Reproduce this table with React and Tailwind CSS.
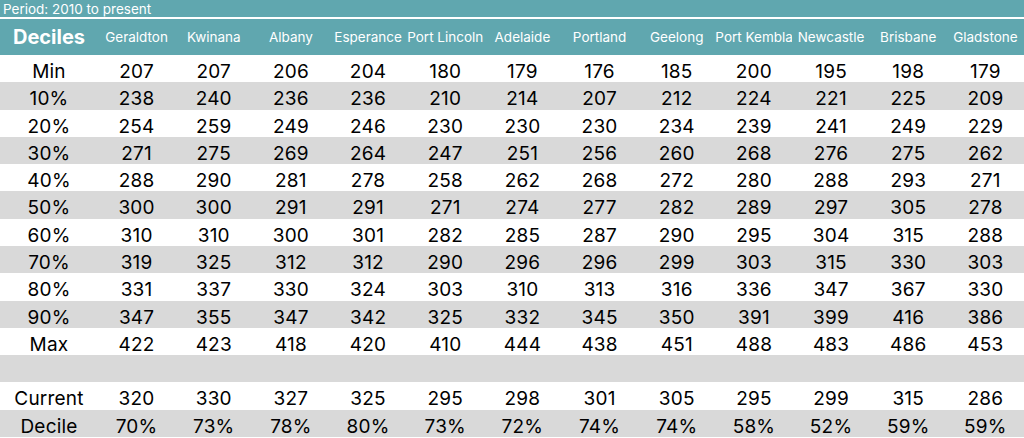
import React from "react";

const cities = ["Geraldton","Kwinana","Albany","Esperance","Port Lincoln","Adelaide","Portland","Geelong","Port Kembla","Newcastle","Brisbane","Gladstone"];

const rows = [
  ["Min", [207,207,206,204,180,179,176,185,200,195,198,179]],
  ["10%", [238,240,236,236,210,214,207,212,224,221,225,209]],
  ["20%", [254,259,249,246,230,230,230,234,239,241,249,229]],
  ["30%", [271,275,269,264,247,251,256,260,268,276,275,262]],
  ["40%", [288,290,281,278,258,262,268,272,280,288,293,271]],
  ["50%", [300,300,291,291,271,274,277,282,289,297,305,278]],
  ["60%", [310,310,300,301,282,285,287,290,295,304,315,288]],
  ["70%", [319,325,312,312,290,296,296,299,303,315,330,303]],
  ["80%", [331,337,330,324,303,310,313,316,336,347,367,330]],
  ["90%", [347,355,347,342,325,332,345,350,391,399,416,386]],
  ["Max", [422,423,418,420,410,444,438,451,488,483,486,453]],
  ["", null],
  ["Current", [320,330,327,325,295,298,301,305,295,299,315,286]],
  ["Decile", ["70%","73%","78%","80%","73%","72%","74%","74%","58%","52%","59%","59%"]],
];

export default function App() {
  return (
    <div className="w-[1024px] h-[438px] bg-white overflow-hidden" style={{ fontFamily: "Inter, 'Liberation Sans', sans-serif" }}>
      <div className="h-[17px] bg-[#60a7af] text-white text-[13.5px] leading-[19px] pl-[3px]">Period: 2010 to present</div>
      <div className="h-[2px] bg-white" />
      <div className="h-[36px] bg-[#60a7af] grid grid-cols-[98px_repeat(12,minmax(0,1fr))] items-center text-white">
        <div className="text-center font-bold text-[20px]">Deciles</div>
        {cities.map((c) => (
          <div key={c} className="text-center whitespace-nowrap overflow-hidden text-[13.5px]">{c}</div>
        ))}
      </div>
      <div className="h-[382px] grid grid-rows-[repeat(14,minmax(0,1fr))] text-black text-[19px] tracking-[0.2px]">
        {rows.map(([label, vals], i) => (
          <div key={i} className={`grid grid-cols-[98px_repeat(12,minmax(0,1fr))] items-center pt-[3px] ${i % 2 === 1 ? "bg-[#d9d9d9]" : "bg-white"}`}>
            <div className="text-center">{label}</div>
            {vals ? vals.map((v, j) => <div key={j} className="text-center">{v}</div>) : null}
          </div>
        ))}
      </div>
    </div>
  );
}
